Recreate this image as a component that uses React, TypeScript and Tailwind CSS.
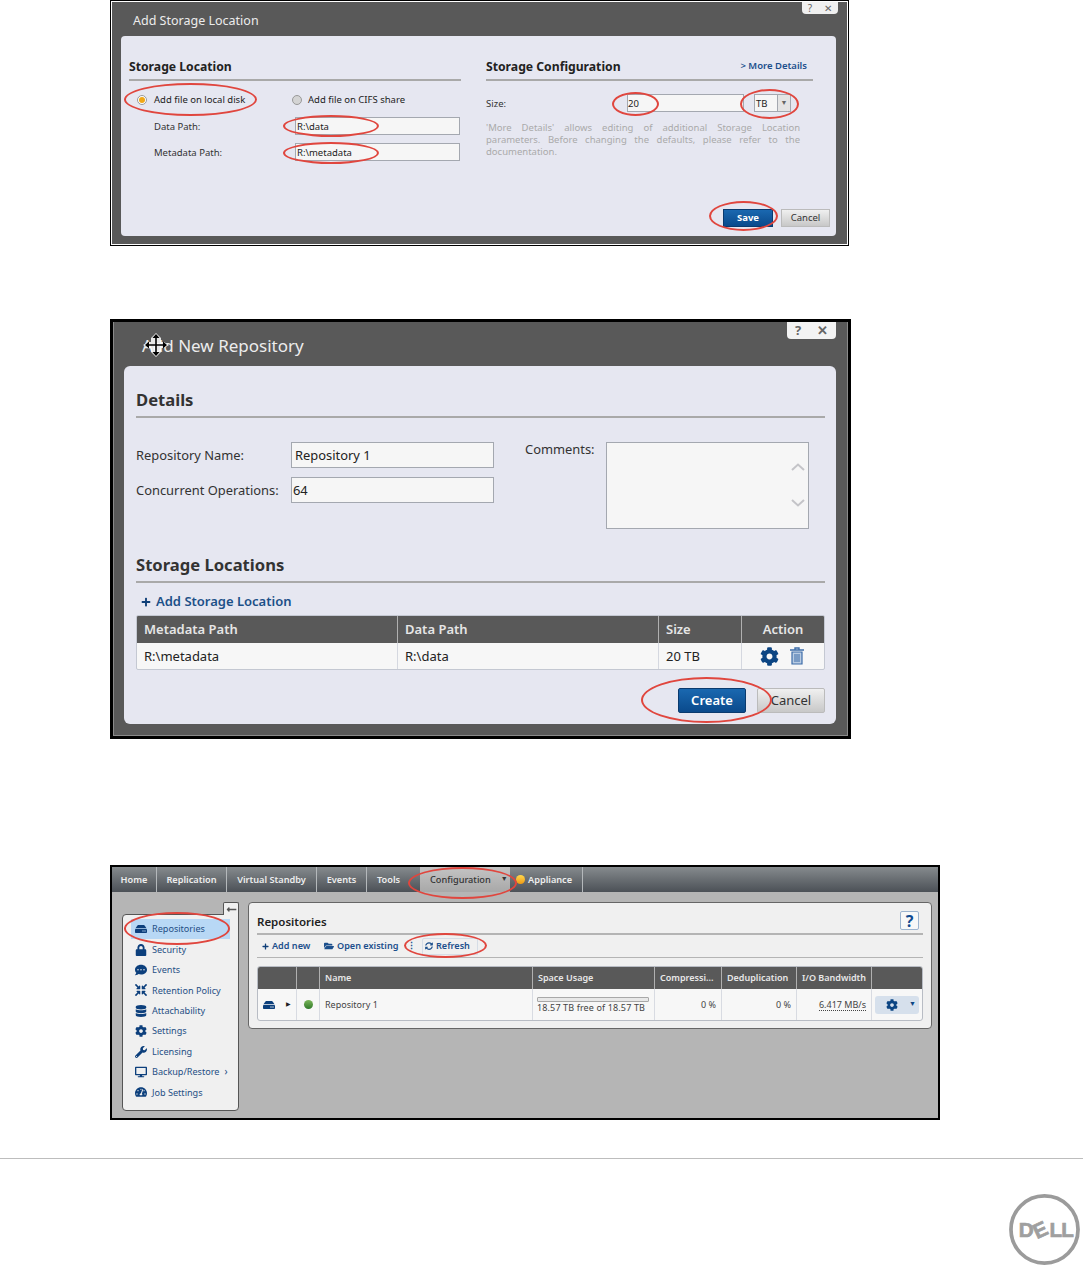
import type { ReactNode } from 'react'
import {
  FaCog,
  FaCommentDots,
  FaCompressArrowsAlt,
  FaDatabase,
  FaDesktop,
  FaFolderOpen,
  FaHdd,
  FaLock,
  FaLongArrowAltLeft,
  FaPlus,
  FaSyncAlt,
  FaTachometerAlt,
  FaWrench,
} from 'react-icons/fa'

const NAV_TABS = [
  { label: 'Home', width: 'w-[45px]' },
  { label: 'Replication', width: 'w-[70px]' },
  { label: 'Virtual Standby', width: 'w-[90px]' },
  { label: 'Events', width: 'w-[50px]' },
]

const SIDE_ITEMS = [
  { label: 'Repositories', icon: FaHdd },
  { label: 'Security', icon: FaLock },
  { label: 'Events', icon: FaCommentDots },
  { label: 'Retention Policy', icon: FaCompressArrowsAlt },
  { label: 'Attachability', icon: FaDatabase },
  { label: 'Settings', icon: FaCog },
  { label: 'Licensing', icon: FaWrench },
  { label: 'Backup/Restore', icon: FaDesktop },
  { label: 'Job Settings', icon: FaTachometerAlt },
]

// red hand-drawn annotation rings lying over the screenshots
function Ring({ className }: { className: string }) {
  return <div className={`pointer-events-none absolute rounded-[50%] border-2 border-[#e0463e] ${className}`} />
}

function SmallHeading({ children }: { children: ReactNode }) {
  return <h3 className="border-b-2 border-[#a9a9a9] pt-[22px] pb-[3px] text-[12.2px] leading-[18px] font-bold text-[#222]">{children}</h3>
}

function BigHeading({ children }: { children: ReactNode }) {
  return <h3 className="border-b-2 border-[#a9a9a9] pb-[5px] text-[16.6px] leading-[22px] font-bold text-[#333]">{children}</h3>
}

function AddStorageDialog() {
  return (
    <div className="relative ml-[110px] h-[246px] w-[739px] border border-black bg-white p-px">
      <div className="flex h-full flex-col bg-[#595959]">
        <div className="flex h-[34px] shrink-0 items-start justify-between pr-[9px] pl-[21px]">
          <span className="pt-[11px] text-[12.5px] leading-[16px] text-[#ececec]">Add Storage Location</span>
          <div className="flex h-3 w-9 items-center justify-center gap-3 rounded-b-sm bg-[#f0f0f0] text-[10px] leading-3 text-[#666]">
            <span>?</span>
            <span>✕</span>
          </div>
        </div>
        <div className="mr-[11px] mb-2 ml-[9px] flex flex-1 flex-col rounded-[4px] bg-[#e6e7f1] pr-[6px] pb-[9px] pl-2">
          <div className="flex">
            <div className="w-[332px]">
              <SmallHeading>Storage Location</SmallHeading>
              <div className="mt-3 flex h-[14px] items-center pl-2 text-[9.5px] text-[#222]">
                <div className="flex w-[155px] items-center gap-[7px]">
                  <span className="flex size-[10px] items-center justify-center rounded-full border border-[#999] bg-white">
                    <span className="size-[6px] rounded-full bg-[#f0a818]" />
                  </span>
                  Add file on local disk
                </div>
                <div className="flex items-center gap-[6px]">
                  <span className="size-[10px] rounded-full border border-[#999] bg-[#d4d4d4]" />
                  Add file on CIFS share
                </div>
              </div>
              <div className="mt-[10px] flex h-[18px] items-center pl-[25px] text-[9.5px] text-[#333]">
                <span className="w-[141px] pt-[3px]">Data Path:</span>
                <div className="flex h-full w-[165px] items-center border border-[#a4a8b0] bg-[#f6f6f6] pt-[2px] pl-px text-[#222]">R:\data</div>
              </div>
              <div className="mt-2 flex h-[18px] items-center pl-[25px] text-[9.5px] text-[#333]">
                <span className="w-[141px] pt-[2px]">Metadata Path:</span>
                <div className="flex h-full w-[165px] items-center border border-[#a4a8b0] bg-[#f6f6f6] pt-[2px] pl-px text-[#222]">R:\metadata</div>
              </div>
            </div>
            <div className="ml-[25px] w-[327px]">
              <div className="relative">
                <SmallHeading>Storage Configuration</SmallHeading>
                <span className="absolute top-[23px] right-[6px] text-[9.5px] font-semibold text-[#1c4f8c]">&gt; More Details</span>
              </div>
              <div className="mt-[13px] flex h-[18px] items-center text-[9.5px] text-[#333]">
                <span className="w-[141px] pt-[2px]">Size:</span>
                <div className="flex h-full w-[117px] items-center border border-[#a4a8b0] bg-[#f6f6f6] pt-[2px] text-[#222]">20</div>
                <div className="ml-[10px] flex h-full w-[37px] items-center border border-[#a4a8b0] bg-[#f6f6f6] pl-[1px] text-[#222]">
                  <span className="flex-1 pt-[2px]">TB</span>
                  <span className="flex h-full w-[13px] items-center justify-center border-l border-[#a4a8b0] bg-[#e4e4e4] text-[7px] text-[#666]">▼</span>
                </div>
              </div>
              <p className="mt-[10px] w-[314px] text-justify text-[9.5px] leading-[12px] text-[#aaa]">
                'More Details' allows editing of additional Storage Location parameters. Before changing the defaults, please refer to the documentation.
              </p>
            </div>
          </div>
          <div className="mt-auto flex justify-end gap-2">
            <button className="h-[18px] w-[50px] border border-[#0a3a6e] bg-gradient-to-b from-[#1a68b0] to-[#0a4a8c] text-[9.5px] font-bold text-white">Save</button>
            <button className="h-[18px] w-[49px] border border-[#bbb] bg-gradient-to-b from-[#f0f0f0] to-[#c8c8c8] text-[9.5px] text-[#333]">Cancel</button>
          </div>
        </div>
      </div>
      <Ring className="top-[82px] left-[13px] h-[33px] w-[133px]" />
      <Ring className="top-[114px] left-[172px] h-[22px] w-[96px]" />
      <Ring className="top-[141px] left-[172px] h-[22px] w-[96px]" />
      <Ring className="top-[91px] left-[501px] h-[24px] w-[47px]" />
      <Ring className="top-[88px] left-[629px] h-[30px] w-[59px]" />
      <Ring className="top-[200px] left-[598px] h-[30px] w-[69px]" />
    </div>
  )
}

function MoveCursor() {
  return (
    <svg viewBox="0 0 28 26" className="absolute top-[10px] left-[29px] h-[26px] w-[28px]">
      <path d="M14 1l5 5v4h3l5 3-5 3h-3v4l-5 5-5-5v-4H6l-5-3 5-3h3V6z" fill="#fff" opacity="0.85" />
      <path d="M14 2l3.5 4h-2.7v6.2H21V9.5l4 3.5-4 3.5v-2.7h-6.2V20h2.7L14 24l-3.5-4h2.7v-6.2H7v2.7L3 13l4-3.5v2.7h6.2V6h-2.7z" fill="#000" />
    </svg>
  )
}

function NewRepositoryDialog() {
  const cell = 'flex items-center border-l border-[#d5d8e0] pt-px pl-[7px]'
  const headCell = 'flex items-center border-l border-[#b0b0b0] pl-[7px]'
  return (
    <div className="relative mt-[73px] ml-[110px] h-[420px] w-[741px] border-[3px] border-black bg-[#8a8a8a]">
      <div className="mx-px mb-px flex h-[413px] flex-col bg-[#595959]">
        <div className="flex h-[44px] shrink-0 items-start justify-between pr-[11px] pl-[28px]">
          <span className="pt-[12px] text-[17px] leading-[24px] text-[#ececec]">Add New Repository</span>
          <div className="flex h-[17px] w-[49px] items-center justify-center gap-[16px] rounded-b-sm bg-[#f3f3f3] text-[13px] font-bold text-[#666]">
            <span>?</span>
            <span>✕</span>
          </div>
        </div>
        <div className="mr-[11px] mb-[11px] ml-[10px] flex flex-1 flex-col rounded-[6px] bg-[#e6e7f1] pt-[23px] pr-[11px] pl-3 text-[#333]">
          <BigHeading>Details</BigHeading>
          <div className="mt-6 flex h-[87px] text-[12.9px]">
            <div className="flex w-[358px] flex-col gap-[9px]">
              <div className="flex h-[26px] items-center">
                <span className="w-[155px] pt-px">Repository Name:</span>
                <div className="flex h-full w-[203px] items-center border border-[#a4a8b0] bg-[#f6f6f6] pt-px pl-[3px] text-[#222]">Repository 1</div>
              </div>
              <div className="flex h-[26px] items-center">
                <span className="w-[155px] pt-px">Concurrent Operations:</span>
                <div className="flex h-full w-[203px] items-center border border-[#a4a8b0] bg-[#f6f6f6] pt-px pl-[1px] text-[#222]">64</div>
              </div>
            </div>
            <span className="ml-[31px] w-[81px] leading-[14px]">Comments:</span>
            <div className="flex w-[203px] flex-col items-end gap-[28px] border border-[#a4a8b0] bg-[#f6f6f6] pt-[20px] pr-[3px]">
              <svg viewBox="0 0 14 8" className="h-2 w-[14px]"><path d="M1 7l6-5.5L13 7" fill="none" stroke="#c4c4c8" strokeWidth="2" /></svg>
              <svg viewBox="0 0 14 8" className="h-2 w-[14px]"><path d="M1 1l6 5.5L13 1" fill="none" stroke="#c4c4c8" strokeWidth="2" /></svg>
            </div>
          </div>
          <div className="mt-[25px]">
            <BigHeading>Storage Locations</BigHeading>
          </div>
          <div className="mt-[10px] flex h-[18px] items-center gap-[5px] pl-[5px] text-[13px] font-semibold text-[#1c5088]">
            <FaPlus className="size-[10px] text-[#0f3f78]" />
            Add Storage Location
          </div>
          <div className="mt-[4px] h-[55px] w-[689px] overflow-hidden rounded-[2px] border border-[#c4c8d2] bg-[#f7f7f7] text-[13px]">
            <div className="grid h-[27px] grid-cols-[260px_261px_83px_83px] bg-[#595959] font-semibold text-[#e6e6e6]">
              <div className="flex items-center pl-[7px]">Metadata Path</div>
              <div className={headCell}>Data Path</div>
              <div className={headCell}>Size</div>
              <div className="flex items-center justify-center border-l border-[#b0b0b0]">Action</div>
            </div>
            <div className="grid h-[26px] grid-cols-[260px_261px_83px_83px] text-[#222]">
              <div className="flex items-center pt-px pl-[7px]">R:\metadata</div>
              <div className={cell}>R:\data</div>
              <div className={cell}>20 TB</div>
              <div className="flex items-center justify-center gap-[11px] border-l border-[#d5d8e0] pr-[3px]">
                <FaCog className="size-[19px] text-[#0c4583]" />
                <svg viewBox="0 0 14 18" className="h-[18px] w-[14px]">
                  <path d="M0 3h14M5 3V1h4v2" fill="none" stroke="#3c6ca8" strokeWidth="1.4" />
                  <path d="M2 5h10v12H2z" fill="#b8cbe2" stroke="#3c6ca8" strokeWidth="1.2" />
                  <path d="M5 7v8M7 7v8M9 7v8" stroke="#3c6ca8" strokeWidth="1" />
                </svg>
              </div>
            </div>
          </div>
          <div className="mt-[18px] flex justify-end gap-[11px] text-[13px]">
            <button className="h-[25px] w-[68px] rounded-[2px] border border-[#0a3a6e] bg-gradient-to-b from-[#1a68b0] to-[#0a4a8c] font-semibold text-white">Create</button>
            <button className="h-[25px] w-[68px] rounded-[2px] border border-[#bbb] bg-gradient-to-b from-[#f0f0f0] to-[#c8c8c8] text-[#333]">Cancel</button>
          </div>
        </div>
      </div>
      <MoveCursor />
      <Ring className="top-[355px] left-[528px] h-[46px] w-[131px]" />
    </div>
  )
}

function RepositoriesView() {
  const head = 'flex items-center border-l border-[#b0b0b0] px-[5px]'
  const td = 'flex items-center justify-end border-l border-[#d8dbe2] pr-[5px]'
  return (
    <div className="relative mt-[126px] ml-[110px] flex h-[255px] w-[830px] flex-col border-2 border-black bg-[#b5b5b5]">
      <div className="flex h-[25px] shrink-0 bg-gradient-to-b from-[#868b8e] to-[#4c5157] text-[9.2px] font-semibold text-[#eee]">
        {NAV_TABS.map((t) => (
          <div key={t.label} className={`flex items-center justify-center border-r border-[#b4b8bb] ${t.width}`}>
            {t.label}
          </div>
        ))}
        <div className="flex w-[53px] items-center pl-[10px]">Tools</div>
        <div className="flex w-[90px] items-center gap-[10px] bg-gradient-to-b from-[#c4c4c4] to-[#a8a8a8] pl-[10px] font-medium text-[#333]">
          Configuration
          <span className="text-[7px]">▼</span>
        </div>
        <div className="flex w-[73px] items-center gap-[3px] border-r border-[#b4b8bb] pl-[6px]">
          <span className="size-[9px] rounded-full bg-gradient-to-b from-[#ffd84a] to-[#ee9a10]" />
          Appliance
        </div>
      </div>
      <div className="flex flex-1 items-start pt-[10px] pl-[10px]">
        <div className="w-[117px]">
          <div className="relative z-10 ml-auto -mb-px flex h-[13px] w-[16px] items-center justify-center rounded-t-[2px] border-x border-t border-[#555] bg-[#f0f0f0] text-[#555]">
            <FaLongArrowAltLeft className="size-[11px]" />
          </div>
          <div className="h-[197px] rounded-[4px] rounded-tr-none border border-[#555] bg-[#f0f0f0] pt-[4px] pr-2 pl-2">
            {SIDE_ITEMS.map((item, i) => (
              <div key={item.label} className={`flex h-[20.4px] items-center gap-[5px] pl-1 text-[9.1px] text-[#1f4f85] ${i === 0 ? 'bg-[#b8d8f5]' : ''}`}>
                <item.icon className="size-3 shrink-0 text-[#0c3f7c]" />
                {item.label}
                {item.label === 'Backup/Restore' && <span className="text-[10px]">›</span>}
              </div>
            ))}
          </div>
        </div>
        <div className="ml-[9px] h-[127px] w-[684px] rounded-[4px] border border-[#666] bg-[#f0f0f0] px-[8px]">
          <div className="flex h-[32px] items-end justify-between border-b-2 border-[#b4b4b4] pr-[4px] pb-[3px]">
            <span className="text-[11.5px] font-semibold text-[#222]">Repositories</span>
            <span className="flex size-[19px] items-center justify-center rounded-[2px] border border-[#9db4cf] bg-[#f8f8f8] text-[16px] leading-none font-bold text-[#0f4a90]">?</span>
          </div>
          <div className="flex h-[23px] items-center border-b border-[#b4b4b4] pl-[5px] text-[9.1px] font-semibold text-[#1c4f8c]">
            <FaPlus className="size-[7px] text-[#0f3f78]" />
            <span className="ml-[3px] w-[52px]">Add new</span>
            <FaFolderOpen className="size-[10px]" />
            <span className="ml-[3px] w-[70px]">Open existing</span>
            <span className="mr-[6px] text-[#1c4f8c]">⋮</span>
            <span className="flex h-[17px] w-[56px] items-center gap-[3px] rounded-t-[2px] border border-[#d6dde6] pl-[2px]">
              <FaSyncAlt className="size-[8px]" />
              Refresh
            </span>
          </div>
          <div className="mt-[8px] h-[55px] w-[666px] overflow-hidden rounded-[3px] border border-[#b8bcc4] bg-[#f7f7f7] text-[9px] text-[#444]">
            <div className="grid h-[22px] grid-cols-[38px_23px_213px_122px_67px_75px_75px_51px] bg-[#595959] font-semibold text-[#e8e8e8]">
              <div />
              <div className={head} />
              <div className={head}>Name</div>
              <div className={head}>Space Usage</div>
              <div className={head}>Compressi...</div>
              <div className={head}>Deduplication</div>
              <div className={head}>I/O Bandwidth</div>
              <div className={head} />
            </div>
            <div className="grid h-[31px] grid-cols-[38px_23px_213px_122px_67px_75px_75px_51px]">
              <div className="flex items-center gap-[11px] pl-[5px]">
                <FaHdd className="size-3 text-[#0c3f7c]" />
                <span className="text-[6px] text-[#222]">▶</span>
              </div>
              <div className="flex items-center justify-center border-l border-[#d8dbe2]">
                <span className="size-[9px] rounded-full bg-gradient-to-b from-[#7ab55a] to-[#2f7a2a]" />
              </div>
              <div className="flex items-center border-l border-[#d8dbe2] pl-[5px]">Repository 1</div>
              <div className="flex flex-col justify-center border-l border-[#d8dbe2] px-[4px]">
                <div className="h-[5px] w-[112px] rounded-[1px] border border-[#a8a8a8] bg-[#e8e8e8]" />
                <span className="leading-[11px] tracking-[0.13px] whitespace-nowrap">18.57 TB free of 18.57 TB</span>
              </div>
              <div className={td}>0 %</div>
              <div className={td}>0 %</div>
              <div className={td}>
                <span className="border-b border-dotted border-[#444] leading-[11px]">6.417 MB/s</span>
              </div>
              <div className="flex items-center justify-center border-l border-[#d8dbe2]">
                <div className="flex h-[18px] w-[44px] items-center justify-between rounded-[3px] bg-[#d6e0ec] pr-[3px] pl-[11px] text-[#0c4583]">
                  <FaCog className="size-3" />
                  <span className="text-[7px]">▼</span>
                </div>
              </div>
            </div>
          </div>
        </div>
      </div>
      <Ring className="top-[45px] left-[12px] h-[33px] w-[106px]" />
      <Ring className="top-0 left-[296px] h-[32px] w-[109px]" />
      <Ring className="top-[66px] left-[292px] h-[25px] w-[83px]" />
    </div>
  )
}

function DellLogo() {
  return (
    <svg viewBox="0 0 72 72" className="size-[71px]">
      <circle cx="36" cy="36" r="34" fill="none" stroke="#9b9b9b" strokeWidth="3.8" />
      <g fill="#9f9f9f" stroke="#9f9f9f" strokeWidth="0.7" fontFamily="'Liberation Sans', sans-serif" fontSize="21" fontWeight="700">
        <text x="10" y="44">D</text>
        <text x="25" y="44" transform="rotate(-25 31 37)">E</text>
        <text x="41" y="44">L</text>
        <text x="53" y="44">L</text>
      </g>
    </svg>
  )
}

export default function App() {
  return (
    <div className="h-[1267px] w-[1083px] overflow-hidden bg-white font-['Noto_Sans',sans-serif]">
      <AddStorageDialog />
      <NewRepositoryDialog />
      <RepositoriesView />
      <div className="mt-[38px] flex justify-end border-t border-[#bdbdbd] pt-[35px] pr-[3px]">
        <DellLogo />
      </div>
    </div>
  )
}
